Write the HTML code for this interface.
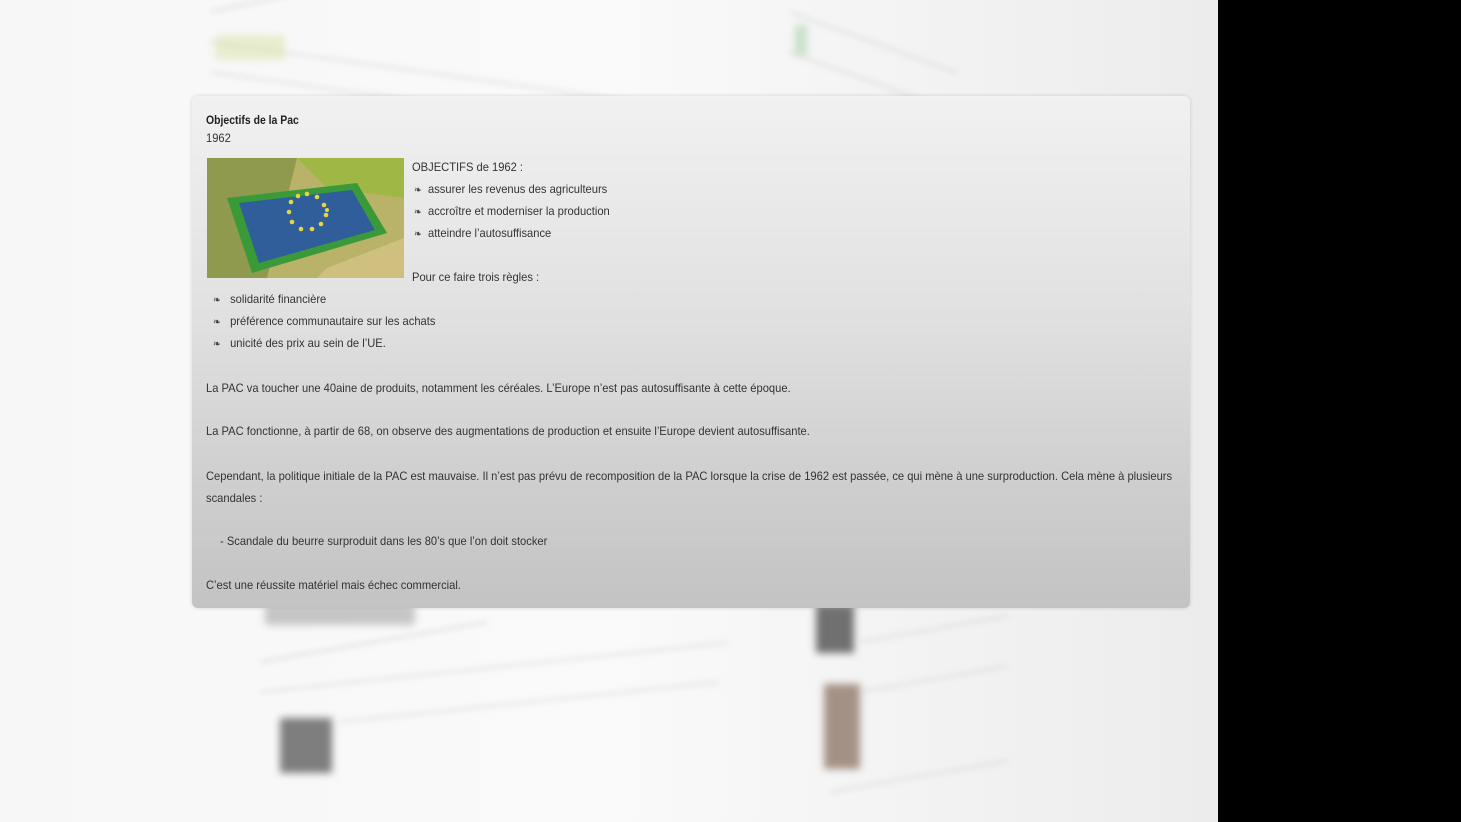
<!DOCTYPE html>
<html><head><meta charset="utf-8"><style>
*{margin:0;padding:0;box-sizing:border-box}
body{width:1461px;height:822px;overflow:hidden;position:relative;background:#000;font-family:"Liberation Sans",sans-serif}
#bg{position:absolute;left:0;top:0;width:1218px;height:822px;background:linear-gradient(90deg,#f7f7f7 0%,#fafafa 50%,#ececec 100%);overflow:hidden}
.bl{position:absolute;background:#c8c8c8;filter:blur(3px);transform:rotate(-12deg);transform-origin:left top;height:4px}
.blk{position:absolute;filter:blur(4px)}
#card{position:absolute;left:192px;top:96px;width:998px;height:512px;border-radius:6px;background:linear-gradient(180deg,#f1f1f1 0%,#e2e2e2 40%,#cfcfcf 75%,#c3c3c3 100%);box-shadow:0 0 4px rgba(0,0,0,.15);color:#333;font-size:12px}
.t{position:absolute;white-space:nowrap;line-height:14px;transform:scaleX(0.93);transform-origin:left center}
.b{font-size:10px;color:#444}
</style></head><body>
<div id="bg">
<div class="bl" style="left:210px;top:10px;width:380px;opacity:.35"></div>
<div class="bl" style="left:210px;top:40px;width:450px;opacity:.3;transform:rotate(8deg)"></div>
<div class="bl" style="left:210px;top:70px;width:420px;opacity:.3;transform:rotate(8deg)"></div>
<div class="blk" style="left:215px;top:35px;width:70px;height:25px;background:#dde5b0;opacity:.6"></div>
<div class="bl" style="left:790px;top:10px;width:180px;opacity:.3;transform:rotate(20deg)"></div>
<div class="bl" style="left:790px;top:50px;width:150px;opacity:.3;transform:rotate(20deg)"></div>
<div class="blk" style="left:795px;top:25px;width:12px;height:30px;background:#9c9;opacity:.5"></div>
<div class="blk" style="left:265px;top:605px;width:150px;height:20px;background:#888;opacity:.45"></div>
<div class="bl" style="left:260px;top:660px;width:230px;opacity:.35;transform:rotate(-10deg)"></div>
<div class="bl" style="left:260px;top:690px;width:470px;opacity:.3;transform:rotate(-6deg)"></div>
<div class="blk" style="left:280px;top:718px;width:52px;height:55px;background:#555;opacity:.75"></div>
<div class="bl" style="left:340px;top:720px;width:380px;opacity:.3;transform:rotate(-6deg)"></div>
<div class="blk" style="left:816px;top:605px;width:38px;height:48px;background:#444;opacity:.75"></div>
<div class="blk" style="left:824px;top:684px;width:36px;height:85px;background:#8a7060;opacity:.75"></div>
<div class="bl" style="left:860px;top:640px;width:150px;opacity:.3;transform:rotate(-10deg)"></div>
<div class="bl" style="left:860px;top:690px;width:150px;opacity:.3;transform:rotate(-10deg)"></div>
<div class="bl" style="left:830px;top:790px;width:180px;opacity:.3;transform:rotate(-10deg)"></div>
</div>
<div id="card">
<div class="t" style="left:14px;top:17px;font-weight:bold;color:#222;transform:scaleX(0.87)">Objectifs de la Pac</div>
<div class="t" style="left:14px;top:35px">1962</div>
<svg style="position:absolute;left:15px;top:62px" width="197" height="120" viewBox="0 0 197 120">
<rect width="197" height="120" fill="#b9b36a"/>
<polygon points="0,0 90,0 60,120 0,120" fill="#8f9a4e"/>
<polygon points="90,0 197,0 197,40 120,30" fill="#9fb845"/>
<polygon points="20,40 150,25 180,75 45,115" fill="#3a9a3a"/>
<polygon points="32,45 145,32 168,72 52,105" fill="#2f5e9a"/>
<g fill="#e8d640">
<circle cx="100" cy="36" r="2.3"/><circle cx="110" cy="39" r="2.3"/><circle cx="117" cy="47" r="2.3"/><circle cx="119" cy="57" r="2.3"/><circle cx="114" cy="66" r="2.3"/><circle cx="105" cy="71" r="2.3"/><circle cx="94" cy="71" r="2.3"/><circle cx="85" cy="64" r="2.3"/><circle cx="82" cy="54" r="2.3"/><circle cx="84" cy="44" r="2.3"/><circle cx="91" cy="38" r="2.3"/><circle cx="120" cy="52" r="2"/>
</g>
<polygon points="120,110 197,80 197,120 110,120" fill="#d0c080"/>
</svg>
<div class="t" style="left:220px;top:64px">OBJECTIFS de 1962 :</div>
<div class="t" style="left:222px;top:86px"><span class="b">❧</span>&nbsp; assurer les revenus des agriculteurs</div>
<div class="t" style="left:222px;top:108px"><span class="b">❧</span>&nbsp; accroître et moderniser la production</div>
<div class="t" style="left:222px;top:130px"><span class="b">❧</span>&nbsp; atteindre l’autosuffisance</div>
<div class="t" style="left:220px;top:174px">Pour ce faire trois règles :</div>
<div class="t" style="left:21px;top:196px"><span class="b">❧</span>&nbsp;&nbsp; solidarité financière</div>
<div class="t" style="left:21px;top:218px"><span class="b">❧</span>&nbsp;&nbsp; préférence communautaire sur les achats</div>
<div class="t" style="left:21px;top:240px"><span class="b">❧</span>&nbsp;&nbsp; unicité des prix au sein de l’UE.</div>
<div class="t" style="left:14px;top:285px">La PAC va toucher une 40aine de produits, notamment les céréales. L’Europe n’est pas autosuffisante à cette époque.</div>
<div class="t" style="left:14px;top:328px">La PAC fonctionne, à partir de 68, on observe des augmentations de production et ensuite l’Europe devient autosuffisante.</div>
<div class="t" style="left:14px;top:373px">Cependant, la politique initiale de la PAC est mauvaise. Il n’est pas prévu de recomposition de la PAC lorsque la crise de 1962 est passée, ce qui mène à une surproduction. Cela mène à plusieurs</div>
<div class="t" style="left:14px;top:395px">scandales :</div>
<div class="t" style="left:28px;top:438px">- Scandale du beurre surproduit dans les 80’s que l’on doit stocker</div>
<div class="t" style="left:14px;top:482px">C’est une réussite matériel mais échec commercial.</div>
</div>
</body></html>
